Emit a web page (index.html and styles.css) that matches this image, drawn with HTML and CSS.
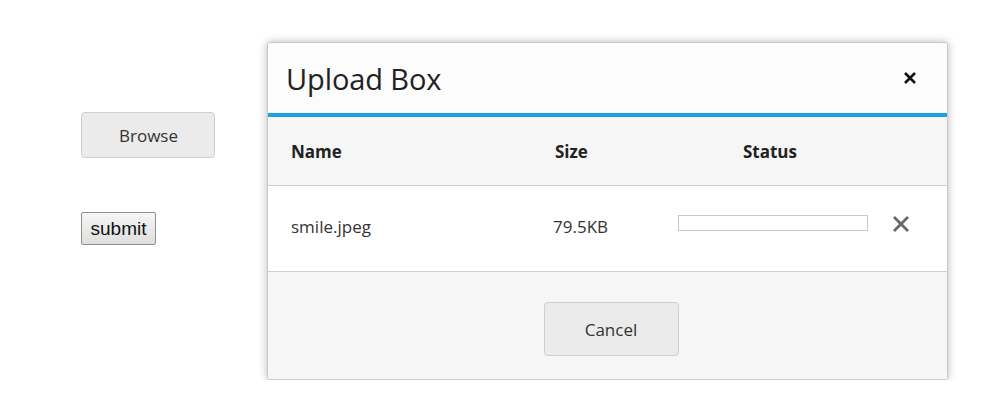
FILE: index.html
```html
<!DOCTYPE html>
<html>
<head>
<meta charset="utf-8">
<link rel="stylesheet" href="styles.css">
</head>
<body>
<div class="page">
  <div class="left">
    <button class="browse">Browse</button>
    <button class="submit">submit</button>
  </div>
  <div class="dialog">
    <div class="dlg-header">
      <span class="title">Upload Box</span>
      <svg class="close" width="14" height="12" viewBox="0 0 14 12"><path d="M2 1 L12 11 M12 1 L2 11" stroke="#111" stroke-width="2.6" stroke-linecap="butt"/></svg>
    </div>
    <div class="grid thead">
      <span>Name</span>
      <span>Size</span>
      <span class="status-h">Status</span>
      <span></span>
    </div>
    <div class="grid trow">
      <span class="cell">smile.jpeg</span>
      <span class="cell size">79.5KB</span>
      <span class="progress"></span>
      <svg class="remove" width="18" height="18" viewBox="0 0 18 18"><path d="M2 2 L16 16 M16 2 L2 16" stroke="#666" stroke-width="2.8"/></svg>
    </div>
    <div class="dlg-footer">
      <button class="cancel">Cancel</button>
    </div>
  </div>
</div>
</body>
</html>
```
FILE: styles.css
```css
html, body { margin: 0; padding: 0; background: #fff; }
body { font-family: "Open Sans", "Noto Sans", sans-serif; color: #333; }
.page { display: flex; padding: 42px 0 0 81px; }
.left { display: flex; flex-direction: column; align-items: flex-start; padding-top: 70px; width: 186px; }
.browse {
  width: 134px; height: 46px; background: #ebebeb; border: 1px solid #cfcfcf; border-radius: 4px;
  font-family: "Open Sans", sans-serif; font-size: 17px; color: #333; padding: 0 0 0 1px; line-height: 46px;
}
.submit {
  margin-top: 54px; width: 75px; height: 33px; padding: 0;
  font-family: "Liberation Sans", Arial, sans-serif; font-size: 19px; color: #111;
  background: linear-gradient(#f6f6f6, #dedede); border: 1px solid #8f8f8f; border-radius: 2px;
}
.dialog {
  width: 679px; border: 1px solid #c8c8c8; border-radius: 3px; background: #fcfcfc;
  box-shadow: 0 0 8px rgba(0,0,0,0.28); overflow: hidden;
}
.dlg-header {
  height: 70px; display: flex; align-items: center; justify-content: space-between;
  padding: 0 30px 0 18px; border-bottom: 4px solid #1ba1e0; background: #fcfcfc;
}
.title { font-size: 29px; color: #222; font-weight: 400; letter-spacing: -0.1px; }
.close { display: block; margin-top: 0; }
.grid { display: grid; grid-template-columns: 264px 123px 190px auto; align-items: center; padding-left: 23px; }
.thead { height: 68px; background: #f6f6f6; border-bottom: 1px solid #cfcfcf; font-weight: 700; font-size: 17px; color: #222; }
.status-h { text-align: center; margin-left: -6px; }
.trow { height: 85px; background: #fff; border-bottom: 1px solid #cfcfcf; font-size: 17px; color: #333; }
.cell { margin-top: -5px; }
.size { margin-left: -2px; }
.progress { display: block; height: 14px; border: 1px solid #c8c8c8; background: #fff; width: 188px; margin-top: -12px; }
.remove { display: block; margin-left: 24px; margin-top: -9px; }
.dlg-footer { height: 107px; background: #f6f6f6; display: flex; justify-content: center; align-items: flex-start; padding-top: 30px; box-sizing: border-box; }
.cancel {
  width: 135px; height: 54px; background: #ebebeb; border: 1px solid #cfcfcf; border-radius: 4px;
  font-family: "Open Sans", sans-serif; font-size: 17px; color: #333; padding: 0; margin-left: 7px;
}
```
